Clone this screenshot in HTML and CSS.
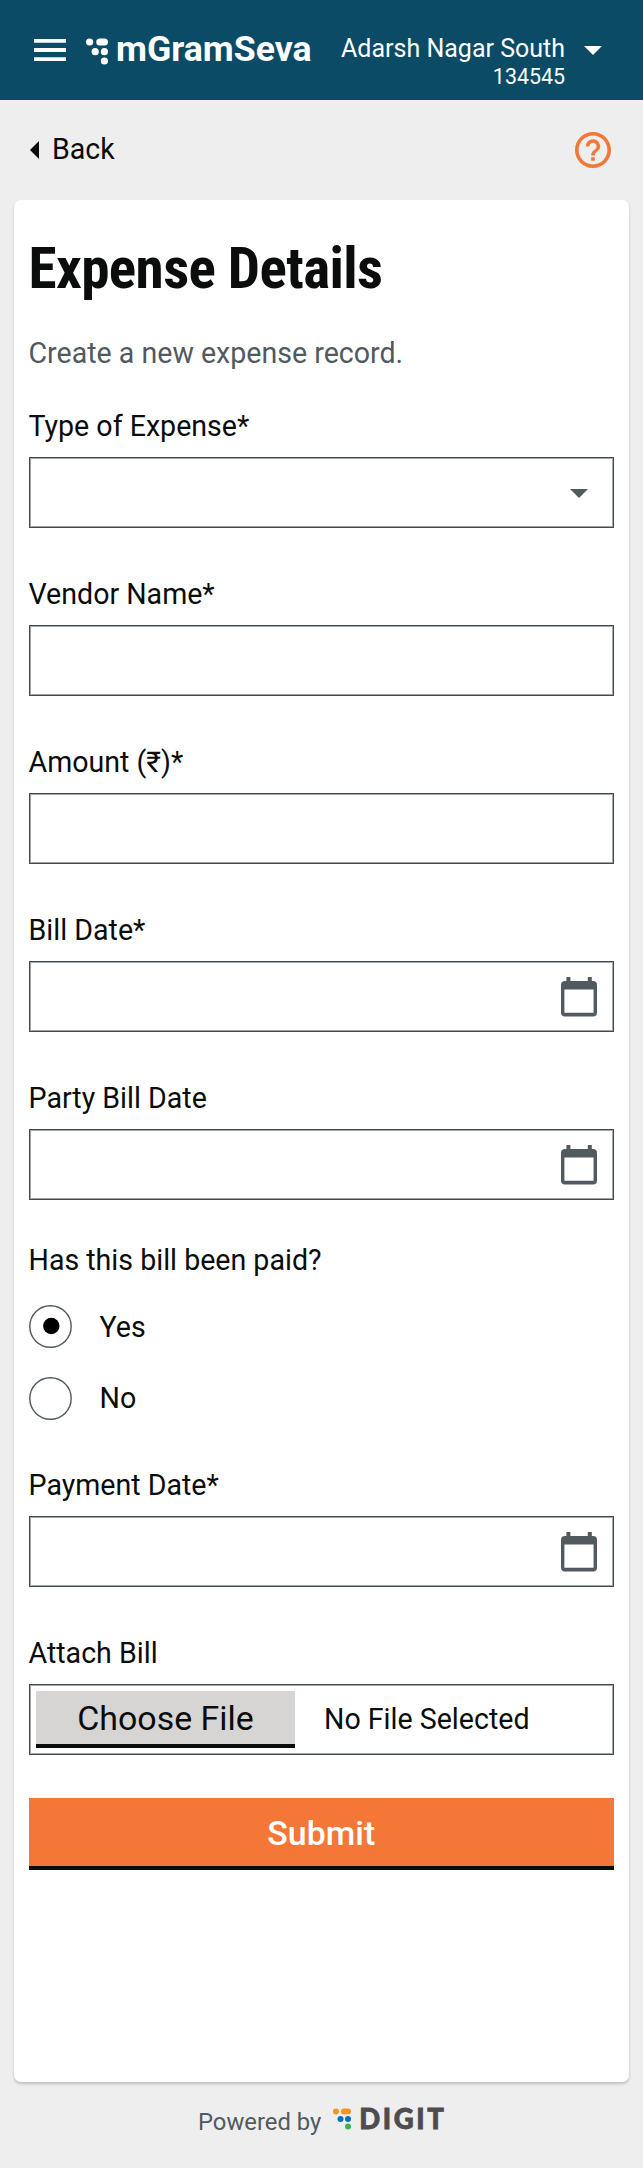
FILE: index.html
```html
<!DOCTYPE html>
<html lang="en">
<head>
<meta charset="utf-8">
<title>mGramSeva</title>
<link rel="stylesheet" href="styles.css">
</head>
<body>
<header class="topbar">
  <svg class="menu" width="32" height="22" viewBox="0 0 32 22"><path fill="#fff" d="M0 0h32v3.8H0zM0 9.1h32v3.8H0zM0 18.2h32V22H0z"/></svg>
  <svg class="mark" width="22" height="28" viewBox="0 0 22 28" fill="#fff"><circle cx="3.6" cy="4" r="3.6"/><rect x="10.2" y=".4" width="11.8" height="7.2" rx="3.6"/><circle cx="9.2" cy="13.7" r="3.6"/><circle cx="18.4" cy="13.7" r="3.6"/><circle cx="18.4" cy="23" r="3.6"/></svg>
  <span class="brand">mGramSeva</span>
  <div class="tenant"><span class="tenant-name">Adarsh Nagar South</span><span class="tenant-code">134545</span></div>
  <svg class="caret" width="18" height="9" viewBox="0 0 18 9"><path fill="#fff" d="M0 0h18L9 9z"/></svg>
</header>
<nav class="subbar">
  <a class="back"><svg width="9" height="18" viewBox="0 0 9 18"><path fill="#0b0c0c" d="M9 0v18L0 9z"/></svg><span>Back</span></a>
  <svg class="help" width="36" height="36" viewBox="2 2 20 20"><path fill="#f47738" d="M11 18h2v-2h-2v2zm1-16C6.480 2 2 6.480 2 12s4.480 10 10 10 10-4.480 10-10S17.520 2 12 2zm0 18c-4.410 0-8-3.590-8-8s3.590-8 8-8 8 3.590 8 8-3.590 8-8 8zm0-14c-2.210 0-4 1.790-4 4h2c0-1.100.9-2 2-2s2 .9 2 2c0 2-3 1.750-3 5h2c0-2.250 3-2.500 3-5 0-2.210-1.790-4-4-4z"/></svg>
</nav>
<main class="card">
  <h1 class="title">Expense Details</h1>
  <p class="intro">Create a new expense record.</p>
  <div class="field"><label class="label">Type of Expense*</label><div class="box"><svg class="drop" width="18" height="9" viewBox="0 0 18 9"><path fill="#505a5f" d="M0 0h18L9 9z"/></svg></div></div>
  <div class="field"><label class="label">Vendor Name*</label><div class="box"></div></div>
  <div class="field"><label class="label">Amount (₹)*</label><div class="box"></div></div>
  <div class="field"><label class="label">Bill Date*</label><div class="box"><svg class="cal" width="36" height="40" viewBox="0 0 36 40"><path fill="#505a5f" fill-rule="evenodd" d="M5.400 0h4v4h17.400V0h4v4H32a4 4 0 0 1 4 4v27.500a4 4 0 0 1-4 4H4a4 4 0 0 1-4-4V8a4 4 0 0 1 4-4h1.400zM3.400 12.500v23.200h29.200V12.500z"/></svg></div></div>
  <div class="field"><label class="label">Party Bill Date</label><div class="box"><svg class="cal" width="36" height="40" viewBox="0 0 36 40"><path fill="#505a5f" fill-rule="evenodd" d="M5.400 0h4v4h17.400V0h4v4H32a4 4 0 0 1 4 4v27.500a4 4 0 0 1-4 4H4a4 4 0 0 1-4-4V8a4 4 0 0 1 4-4h1.400zM3.400 12.500v23.200h29.200V12.500z"/></svg></div></div>
  <div class="choices">
    <div class="label">Has this bill been paid?</div>
    <div class="choice"><svg width="43" height="43" viewBox="0 0 43 43"><circle cx="21.500" cy="21.500" r="20.700" fill="none" stroke="#505a5f" stroke-width="1.400"/><circle cx="22.300" cy="21" r="8.200"/></svg><span>Yes</span></div>
    <div class="choice"><svg width="43" height="43" viewBox="0 0 43 43"><circle cx="21.500" cy="21.500" r="20.700" fill="none" stroke="#505a5f" stroke-width="1.400"/></svg><span>No</span></div>
  </div>
  <div class="field"><label class="label">Payment Date*</label><div class="box"><svg class="cal" width="36" height="40" viewBox="0 0 36 40"><path fill="#505a5f" fill-rule="evenodd" d="M5.400 0h4v4h17.400V0h4v4H32a4 4 0 0 1 4 4v27.500a4 4 0 0 1-4 4H4a4 4 0 0 1-4-4V8a4 4 0 0 1 4-4h1.400zM3.400 12.500v23.200h29.200V12.500z"/></svg></div></div>
  <div class="field file-field"><label class="label">Attach Bill</label><div class="box file"><button class="choose">Choose File</button><span class="file-name">No File Selected</span></div></div>
  <button class="submit">Submit</button>
</main>
<footer class="footer">
  <span class="powered">Powered by</span>
  <svg class="digit-mark" width="18" height="22" viewBox="0 0 18 22"><g fill="#f7931e"><circle cx="3" cy="3.400" r="3"/><rect x="8" y=".5" width="10" height="5.800" rx="2.900"/></g><g fill="#0071bc"><circle cx="7.500" cy="11" r="3"/><circle cx="15" cy="11" r="3"/></g><circle cx="15" cy="18.500" r="3" fill="#39b54a"/></svg>
  <span class="digit">DIGIT</span>
</footer>
</body>
</html>
```

FILE: styles.css
```css
* { box-sizing: border-box; }
body {
  margin: 0;
  height: 2168px;
  background: #eee;
  color: #0b0c0c;
  font-family: Roboto, sans-serif;
  font-size: 28.58px;
  line-height: 40px;
  display: flex;
  flex-direction: column;
}
svg { display: block; flex: none; }
button { font-family: inherit; border-radius: 0; }

.topbar {
  height: 100px;
  padding: 0 41px 0 34px;
  background: #0b4b66;
  color: #fff;
  display: flex;
  align-items: center;
}
.mark { margin: 3px 0 0 20px; }
.brand { font-size: 35.7px; font-weight: 700; margin-left: 8px; margin-top: -2px; white-space: nowrap; }
.tenant { margin-left: auto; margin-top: 25px; display: flex; flex-direction: column; align-items: flex-end; white-space: nowrap; }
.tenant-name { font-size: 25px; line-height: 28px; }
.tenant-code { font-size: 21.4px; line-height: 27px; }
.caret { margin-left: 19px; }

.subbar { height: 100px; padding: 0 32px 0 30px; display: flex; align-items: center; justify-content: space-between; }
.back { display: flex; align-items: center; gap: 13px; }
.back span { margin-top: -2px; }

.card {
  width: 615px;
  height: 1882px;
  margin-left: 14px;
  padding: 35px 15px 0 14.5px;
  background: #fff;
  border-radius: 7px;
  box-shadow: 0 2px 3px rgba(0, 0, 0, .2);
}
.title { margin: 0; font-family: "Roboto Condensed", Roboto, sans-serif; font-size: 57.15px; line-height: 67px; font-weight: 700; font-stretch: condensed; letter-spacing: -.6px; white-space: nowrap; }
.intro { margin: 31px 0 33px; color: #505a5f; }
.label { display: block; }
.field { height: 168px; }
.box {
  height: 71px;
  margin-top: 11px;
  border: 1px solid #414b50;
  box-shadow: inset 0 0 0 1px rgba(65, 75, 80, .5);
  display: flex;
  align-items: center;
  justify-content: flex-end;
}
.drop { margin: 2px 25px 0 0; }
.cal { margin: 1px 16px 0 0; }
.choices { margin-top: -6px; height: 225px; }
.choice { height: 43px; margin-top: 25px; display: flex; align-items: center; gap: 28px; }
.choice + .choice { margin-top: 28.5px; }
.choice + .choice span { margin-top: -1px; }
.file { justify-content: flex-start; padding-left: 6.5px; gap: 29px; }
.file-name { margin-top: -1px; }
.choose {
  width: 259px;
  height: 57px;
  padding: 2px 0 0;
  border: 0;
  border-bottom: 4px solid #0b0c0c;
  background: #d6d5d4;
  color: #0b0c0c;
  font-size: 33.9px;
}
.file-field { height: 165px; }
.submit {
  display: block;
  width: 100%;
  height: 72px;
  padding: 2px 0 0;
  border: 0;
  border-bottom: 4px solid #0b0c0c;
  background: #f47738;
  color: #fff;
  font-size: 33.9px;
  font-weight: 500;
}

.footer { height: 86px; padding-left: 198px; display: flex; align-items: flex-start; color: #505a5f; }
.powered { font-size: 23.8px; margin-top: 20px; white-space: nowrap; }
.digit-mark { margin: 26px 0 0 12px; }
.digit { margin: 17px 0 0 8px; font: 900 27.5px/40px Lato, sans-serif; letter-spacing: 2.6px; color: #4d4d4f; -webkit-text-stroke: .8px #4d4d4f; }
```
